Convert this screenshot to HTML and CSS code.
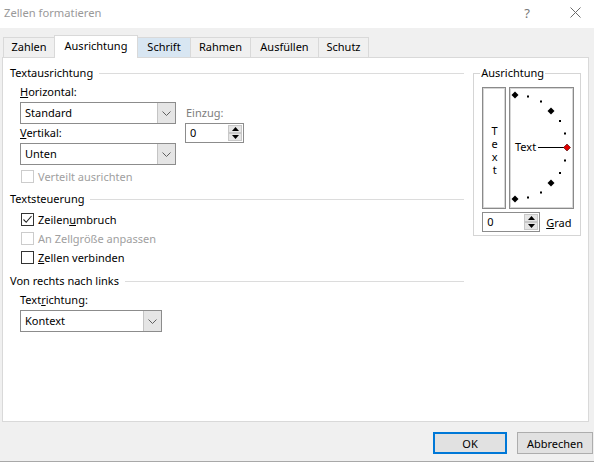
FILE: index.html
```html
<!DOCTYPE html>
<html lang="de">
<head>
<meta charset="utf-8">
<title>Zellen formatieren</title>
<link rel="stylesheet" href="styles.css">
</head>
<body>
<div class="window">
  <div class="titlebar">
    <span class="title">Zellen formatieren</span>
    <span class="help">?</span>
    <svg class="close" width="11" height="11" viewBox="0 0 11 11"><path d="M0.5 0.5 L10.5 10.5 M10.5 0.5 L0.5 10.5" stroke="#6b6b6b" stroke-width="1" fill="none"/></svg>
  </div>

  <div class="tabs">
    <div class="tab tab-zahlen">Zahlen</div>
    <div class="tab tab-ausrichtung active">Ausrichtung</div>
    <div class="tab tab-schrift hover">Schrift</div>
    <div class="tab tab-rahmen">Rahmen</div>
    <div class="tab tab-ausfuellen">Ausfüllen</div>
    <div class="tab tab-schutz">Schutz</div>
  </div>

  <div class="panel">
    <div class="main">
      <div class="heading"><span>Textausrichtung</span><i class="rule"></i></div>
      <div class="align-block">
        <div class="align-left">
          <div class="label"><u>H</u>orizontal:</div>
          <div class="combo combo-wide">
            <span class="combo-value">Standard</span>
            <span class="combo-btn"><svg width="9" height="5" viewBox="0 0 9 5"><path d="M0.5 0.5 L4.5 4.5 L8.5 0.5" stroke="#606060" fill="none"/></svg></span>
          </div>
          <div class="label label-gap"><u>V</u>ertikal:</div>
          <div class="combo combo-wide">
            <span class="combo-value">Unten</span>
            <span class="combo-btn"><svg width="9" height="5" viewBox="0 0 9 5"><path d="M0.5 0.5 L4.5 4.5 L8.5 0.5" stroke="#606060" fill="none"/></svg></span>
          </div>
          <div class="check check-first disabled"><span class="box"></span>Verteilt ausrichten</div>
        </div>
        <div class="indent">
          <div class="label disabled-label">Einzug:</div>
          <div class="spin spin-indent">
            <span class="spin-value">0</span>
            <span class="spin-btns">
              <span class="spin-btn"><svg width="7" height="4" viewBox="0 0 7 4"><path d="M0 4 L3.5 0 L7 4 Z" fill="#000"/></svg></span>
              <span class="spin-btn"><svg width="7" height="4" viewBox="0 0 7 4"><path d="M0 0 L3.5 4 L7 0 Z" fill="#000"/></svg></span>
            </span>
          </div>
        </div>
      </div>

      <div class="heading heading-gap"><span>Textsteuerung</span><i class="rule"></i></div>
      <div class="check check-wrap"><span class="box"><svg width="11" height="11" viewBox="0 0 11 11"><path d="M1.5 5.5 L4.2 8.3 L9.5 2" stroke="#222" stroke-width="1.1" fill="none"/></svg></span>Zeilen<u>u</u>mbruch</div>
      <div class="check disabled"><span class="box"></span>An Zellgröße anpassen</div>
      <div class="check"><span class="box"></span><u>Z</u>ellen verbinden</div>

      <div class="heading heading-gap-lg"><span>Von rechts nach links</span><i class="rule"></i></div>
      <div class="indent-block">
        <div class="label">Text<u>r</u>ichtung:</div>
        <div class="combo combo-narrow">
          <span class="combo-value">Kontext</span>
          <span class="combo-btn"><svg width="9" height="5" viewBox="0 0 9 5"><path d="M0.5 0.5 L4.5 4.5 L8.5 0.5" stroke="#606060" fill="none"/></svg></span>
        </div>
      </div>
    </div>

    <fieldset class="orient">
      <legend>Ausrichtung</legend>
      <div class="dial-row">
        <div class="vtext"><span class="vtext-label">Text</span></div>
        <div class="dial">
          <svg width="63" height="120" viewBox="0 0 63 120">
            <g fill="#000">
              <path d="M5 3.5 L8.5 7 L5 10.5 L1.5 7 Z"/>
              <rect x="17" y="7.5" width="2" height="2"/>
              <rect x="30" y="12.5" width="2" height="2"/>
              <path d="M41 19.5 L44.5 23 L41 26.5 L37.5 23 Z"/>
              <rect x="49" y="32" width="2" height="2"/>
              <rect x="54" y="44.5" width="2" height="2"/>
              <rect x="54" y="71.5" width="2" height="2"/>
              <rect x="49" y="84" width="2" height="2"/>
              <path d="M41 91.5 L44.5 95 L41 98.5 L37.5 95 Z"/>
              <rect x="30" y="103.5" width="2" height="2"/>
              <rect x="17" y="108.5" width="2" height="2"/>
              <path d="M5 107.5 L8.5 111 L5 114.5 L1.5 111 Z"/>
            </g>
            <text x="5" y="63" class="dial-text">Text</text>
            <path d="M28 59.5 L54 59.5" stroke="#000" stroke-width="1"/>
            <path d="M57 56 L60.5 59.5 L57 63 L53.5 59.5 Z" fill="#e00000" stroke="#400000" stroke-width="0.6"/>
          </svg>
        </div>
      </div>
      <div class="grad-row">
        <div class="spin spin-grad">
          <span class="spin-value">0</span>
          <span class="spin-btns">
            <span class="spin-btn"><svg width="7" height="4" viewBox="0 0 7 4"><path d="M0 4 L3.5 0 L7 4 Z" fill="#000"/></svg></span>
            <span class="spin-btn"><svg width="7" height="4" viewBox="0 0 7 4"><path d="M0 0 L3.5 4 L7 0 Z" fill="#000"/></svg></span>
          </span>
        </div>
        <span class="grad-label"><u>G</u>rad</span>
      </div>
    </fieldset>
  </div>

  <div class="footer">
    <button class="btn btn-primary">OK</button>
    <button class="btn">Abbrechen</button>
  </div>
</div>
</body>
</html>
```
FILE: styles.css
```css
* { box-sizing: border-box; }

html, body {
  margin: 0;
  padding: 0;
}

body {
  width: 594px;
  height: 462px;
  overflow: hidden;
  background: #f0f0f0;
  font-family: "Noto Sans", "Open Sans", sans-serif;
  font-size: 11px;
  color: #000;
}

.window {
  width: 594px;
  height: 462px;
  border-bottom: 1px solid #a8a8a8;
}

u { text-decoration: underline; text-underline-offset: 1px; }

/* Title bar */
.titlebar {
  height: 28px;
  background: #fff;
  display: flex;
  align-items: center;
  padding: 0 0 3px 4px;
}
.title {
  font-size: 11.2px;
  color: #999;
  flex: 1;
}
.help {
  font-size: 13px;
  color: #777;
  margin-right: 40px;
}
.close {
  margin-right: 13px;
}

/* Tabs */
.tabs {
  display: flex;
  align-items: flex-end;
  margin-top: 7px;
  padding-left: 3px;
  height: 22px;
  position: relative;
  z-index: 1;
}
.tab {
  height: 20px;
  line-height: 18px;
  text-align: center;
  border: 1px solid #d9d9d9;
  border-bottom: none;
  border-right: none;
  background: #f0f0f0;
}
.tab-schutz { border-right: 1px solid #d9d9d9; }
.tab.hover { background: #d8e6f2; border-color: #d9d9d9; }
.tab.active {
  height: 23px;
  margin-bottom: -1px;
  background: #fff;
  line-height: 20px;
  border-right: 1px solid #d9d9d9;
}
.tab-zahlen { width: 51px; }
.tab-ausrichtung { width: 84px; }
.tab-schrift { width: 52px; border-left: none; }
.tab-rahmen { width: 60px; }
.tab-ausfuellen { width: 68px; }
.tab-schutz { width: 51px; }

/* Panel */
.panel {
  margin: 0 5px 0 2px;
  height: 365px;
  background: #fff;
  border: 1px solid #d9d9d9;
  display: flex;
  align-items: flex-start;
}

.main {
  width: 471px;
  padding: 7px 9px 0 7px;
}

.heading {
  display: flex;
  align-items: center;
  height: 16px;
  line-height: 16px;
}
.heading .rule {
  flex: 1;
  height: 1px;
  background: #dcdcdc;
  margin-left: 6px;
}
.heading-gap { margin-top: 7px; }
.heading-gap-lg { margin-top: 8px; }

.label {
  height: 16px;
  line-height: 16px;
}

.align-block {
  display: flex;
  margin-top: 3px;
  padding-left: 10px;
}

.label-gap { margin-top: 1px; }

.combo {
  display: flex;
  height: 22px;
  margin-top: 2px;
  border: 1px solid #8c8c8c;
  background: #fff;
}
.combo-wide { width: 156px; }
.combo-narrow { width: 142px; margin-top: 2px; }
.combo-value {
  flex: 1;
  line-height: 20px;
  padding-left: 4px;
}
.combo-btn {
  width: 18px;
  background: #e5e5e5;
  border-left: 1px solid #c4c4c4;
  display: flex;
  align-items: center;
  justify-content: center;
}

.indent {
  margin-left: 9px;
  margin-top: 21px;
}
.disabled-label {
  color: #7d7d7d;
  padding-left: 1px;
}

.spin {
  display: flex;
  height: 20px;
  border: 1px solid #8c8c8c;
  background: #fff;
}
.spin-indent { width: 59px; margin-top: 2px; }
.spin-grad { width: 58px; }
.spin-value {
  flex: 1;
  line-height: 18px;
  padding-left: 4px;
}
.spin-btns {
  width: 16px;
  display: flex;
  flex-direction: column;
  padding: 1px;
}
.spin-btn {
  flex: 1;
  background: #e5e5e5;
  border: 1px solid #c8c8c8;
  display: flex;
  align-items: center;
  justify-content: center;
}

.check {
  display: flex;
  align-items: center;
  height: 16px;
  margin-top: 3px;
  padding-left: 11px;
}
.check-wrap { margin-top: 4px; }
.check-first { margin-top: 3px; padding-left: 1px; }
.check .box {
  width: 13px;
  height: 13px;
  border: 1px solid #333;
  background: #fff;
  margin-right: 4px;
  display: flex;
  align-items: center;
  justify-content: center;
}
.check.disabled { color: #a0a0a0; }
.check.disabled .box { border-color: #cccccc; }

.indent-block {
  padding-left: 10px;
  margin-top: 3px;
}

/* Orientation group */
.orient {
  margin: 7px 7px 0 0;
  padding: 6px 0 3px 8px;
  width: 108px;
  border: 1px solid #d5d5d5;
  min-inline-size: 0;
}
.orient legend {
  padding: 0 1px;
  margin-left: -2px;
  line-height: 16px;
  height: 16px;
}
.dial-row {
  display: flex;
  gap: 3px;
}
.vtext {
  width: 24px;
  height: 122px;
  border: 1px solid #8a8a8a;
  box-shadow: inset 0 0 0 1px #d6d6d6;
  display: flex;
  align-items: center;
  justify-content: center;
}
.vtext-label {
  writing-mode: vertical-rl;
  text-orientation: upright;
  letter-spacing: -2px;
  line-height: 12px;
  padding-top: 2px;
}
.dial {
  width: 65px;
  height: 122px;
  border: 1px solid #8a8a8a;
  box-shadow: inset 0 0 0 1px #d6d6d6;
}
.dial svg { display: block; }
.dial-text {
  font-family: "Noto Sans", "Open Sans", sans-serif;
  font-size: 11px;
  fill: #000;
}
.grad-row {
  display: flex;
  align-items: center;
  margin-top: 3px;
}
.grad-label { margin-left: 6px; }

/* Footer */
.footer {
  display: flex;
  justify-content: flex-end;
  gap: 10px;
  padding: 10px 1px 0 0;
}
.btn {
  height: 22px;
  font-family: "Noto Sans", "Open Sans", sans-serif;
  font-size: 11px;
  color: #000;
  background: #e1e1e1;
  border: 1px solid #adadad;
  padding: 0;
  width: 76px;
}
.btn-primary {
  width: 74px;
  border: 2px solid #0078d7;
}
```
